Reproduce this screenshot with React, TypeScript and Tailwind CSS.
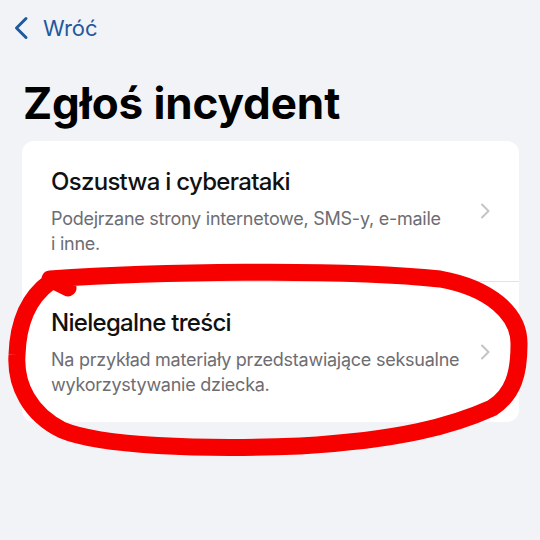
import React from "react";

function Chevron({ className }: { className?: string }) {
  return (
    <svg className={className} width="10" height="16" viewBox="0 0 10 16" fill="none">
      <path d="M2 1.5 L8.5 8 L2 14.5" stroke="#c4c4c8" strokeWidth="2" strokeLinecap="round" strokeLinejoin="round" />
    </svg>
  );
}

function Row({ title, lines }: { title: string; lines: string[] }) {
  return (
    <div className="flex items-center pl-[29px] pr-[29px]">
      <div className="flex-1 pt-[27px] pb-[25px]">
        <div className="text-[24px] leading-[28px] font-medium text-[#111111] tracking-[-0.7px]">{title}</div>
        <div className="mt-[10px] text-[18px] leading-[25px] text-[#6d6d72] tracking-[-0.25px]">
          {lines.map((l, i) => (
            <div key={i} className="whitespace-nowrap">{l}</div>
          ))}
        </div>
      </div>
      <Chevron className="ml-2 shrink-0" />
    </div>
  );
}

export default function App() {
  return (
    <div
      className="relative w-[540px] h-[540px] overflow-hidden bg-[#f2f3f7]"
      style={{ fontFamily: "Inter, 'Noto Sans', sans-serif" }}
    >
      <div className="flex items-center pt-[14px] pl-[13px] h-[42px]">
        <svg width="16" height="24" viewBox="0 0 16 24" fill="none">
          <path d="M13 2.5 L3.5 12 L13 21.5" stroke="#1f5a9e" strokeWidth="3" strokeLinecap="round" strokeLinejoin="round" />
        </svg>
        <span className="ml-[14px] text-[22px] leading-[28px] text-[#1f5a9e]">Wróć</span>
      </div>
      <h1 className="mt-[40px] pl-[23px] text-[44px] leading-[43px] font-bold text-black tracking-[-0.1px]">
        Zgłoś incydent
      </h1>
      <div className="mt-[16px] ml-[22px] w-[497px] rounded-[12px] bg-white overflow-hidden">
        <div className="flex flex-col">
          <Row
            title="Oszustwa i cyberataki"
            lines={["Podejrzane strony internetowe, SMS-y, e-maile", "i inne."]}
          />
          <div className="ml-[29px] h-px bg-[#e3e3e7]" />
          <Row
            title="Nielegalne treści"
            lines={["Na przykład materiały przedstawiające seksualne", "wykorzystywanie dziecka."]}
          />
        </div>
      </div>
      <svg className="absolute left-0 top-0 pointer-events-none" width="540" height="540" viewBox="0 0 540 540" fill="none">
        <path
          d="M68 288 L50 279 C150 272 340 268 440 279 C490 288 520 314 519 345 C519 372 514 394 492 408 C452 426 400 440 300 446 C200 450 100 446 62 430 C30 414 15 385 17 355 C18 322 28 298 50 282"
          stroke="#f70000"
          strokeWidth="17"
          strokeLinecap="round"
          strokeLinejoin="round"
        />
      </svg>
    </div>
  );
}
